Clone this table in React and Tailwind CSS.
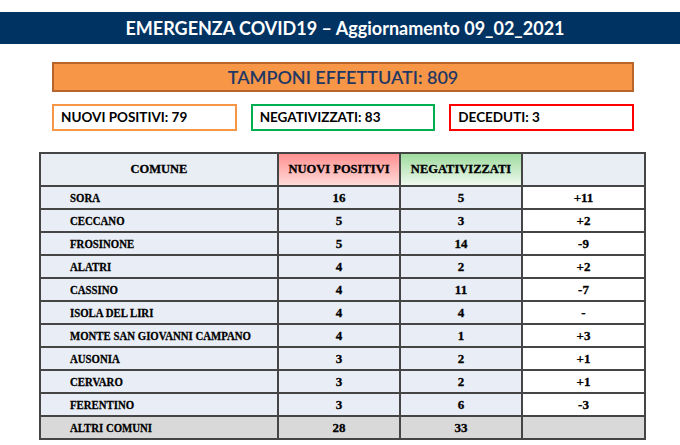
import React from "react";

const rows = [
  ["SORA", "16", "5", "+11"],
  ["CECCANO", "5", "3", "+2"],
  ["FROSINONE", "5", "14", "-9"],
  ["ALATRI", "4", "2", "+2"],
  ["CASSINO", "4", "11", "-7"],
  ["ISOLA DEL LIRI", "4", "4", "-"],
  ["MONTE SAN GIOVANNI CAMPANO", "4", "1", "+3"],
  ["AUSONIA", "3", "2", "+1"],
  ["CERVARO", "3", "2", "+1"],
  ["FERENTINO", "3", "6", "-3"],
];

const cal = { fontFamily: "Lato, 'Open Sans', sans-serif" };
const serif = { fontFamily: "'Liberation Serif', 'Times New Roman', serif" };

const cell = "border-r-2 border-b-2 border-[#454545] flex items-center";

function Name({ children }) {
  return (
    <span className="inline-block whitespace-nowrap origin-left scale-x-[0.83]">
      {children}
    </span>
  );
}

export default function App() {
  return (
    <div className="w-[680px] h-[445px] bg-white overflow-hidden pt-[12px]">
      <div
        className="h-[32px] bg-[#003262] flex items-center justify-center pl-[10px] text-white font-bold text-[18px]"
        style={cal}
      >
        EMERGENZA COVID19 – Aggiornamento 09_02_2021
      </div>

      <div className="ml-[52px] w-[582px] mt-[18px]">
        <div
          className="h-[30px] bg-[#f79646] border-2 border-[#b8652b] flex items-center justify-center text-[#1f3864] text-[18px] font-semibold"
          style={cal}
        >
          TAMPONI EFFETTUATI: 809
        </div>
        <div className="grid grid-cols-3 gap-[14px] mt-[12px]" style={cal}>
          <div className="h-[27px] border-2 border-[#f79646] flex items-center pl-[7px] font-bold text-[13.5px] text-black">
            NUOVI POSITIVI: 79
          </div>
          <div className="h-[27px] border-2 border-[#00b050] flex items-center pl-[7px] font-bold text-[13.5px] text-black">
            NEGATIVIZZATI: 83
          </div>
          <div className="h-[27px] border-2 border-[#ff0000] flex items-center pl-[7px] font-bold text-[13.5px] text-black">
            DECEDUTI: 3
          </div>
        </div>
      </div>

      <div
        className="ml-[39px] mt-[21px] w-[607px] grid grid-cols-[238px_122px_122px_123px] border-l-2 border-t-2 border-[#454545] text-[13px] font-bold text-black [-webkit-text-stroke:0.3px_#000]"
        style={serif}
      >
        <div className={`h-[33px] ${cell} bg-[#e9edf4] justify-center text-[12.5px]`}>COMUNE</div>
        <div className={`h-[33px] ${cell} bg-gradient-to-b from-[#ff9090] to-[#ffd9d9] justify-center text-[12.5px]`}>
          NUOVI POSITIVI
        </div>
        <div className={`h-[33px] ${cell} bg-gradient-to-b from-[#9edb9e] to-[#eef8ee] justify-center text-[12.5px]`}>
          NEGATIVIZZATI
        </div>
        <div className={`h-[33px] ${cell} bg-[#e9edf4]`}></div>

        {rows.map((r) => (
          <React.Fragment key={r[0]}>
            <div className={`h-[23px] ${cell} bg-[#e9eef6] pl-[29px] pt-[1px]`}>
              <Name>{r[0]}</Name>
            </div>
            <div className={`h-[23px] ${cell} bg-[#e9eef6] justify-center pt-[1px]`}>{r[1]}</div>
            <div className={`h-[23px] ${cell} bg-[#e9eef6] justify-center pt-[1px]`}>{r[2]}</div>
            <div className={`h-[23px] ${cell} bg-white justify-center pt-[1px]`}>{r[3]}</div>
          </React.Fragment>
        ))}

        <div className={`h-[23px] ${cell} bg-[#d9d9d9] pl-[29px] pt-[1px]`}>
          <Name>ALTRI COMUNI</Name>
        </div>
        <div className={`h-[23px] ${cell} bg-[#d9d9d9] justify-center pt-[1px]`}>28</div>
        <div className={`h-[23px] ${cell} bg-[#d9d9d9] justify-center pt-[1px]`}>33</div>
        <div className={`h-[23px] ${cell} bg-[#d9d9d9]`}></div>
      </div>
    </div>
  );
}
